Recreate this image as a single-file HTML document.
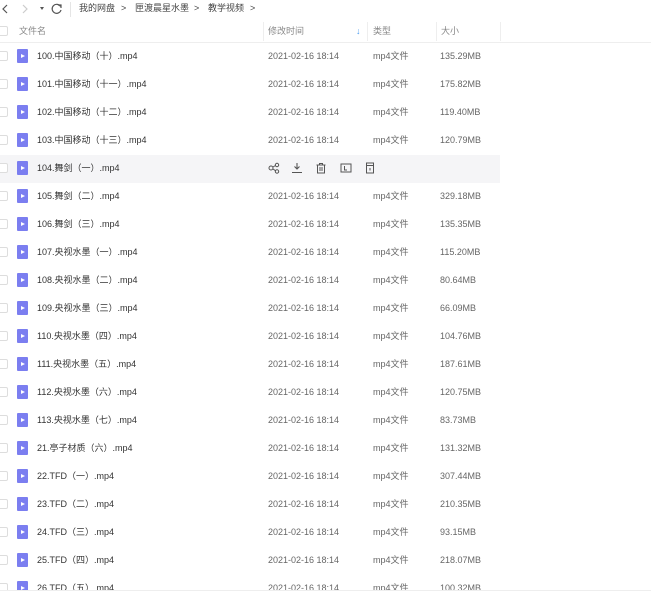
<!DOCTYPE html>
<html><head><meta charset="utf-8"><style>
*{margin:0;padding:0;box-sizing:border-box}
body{width:651px;height:598px;overflow:hidden;background:#fff;font-family:"Liberation Sans","Noto Sans CJK SC",sans-serif;color:#333;font-size:9px;line-height:12px;position:relative}
.abs{position:absolute;white-space:nowrap;line-height:12px}
.tb{position:absolute;left:0;top:0;width:651px;height:20px}
.hd{position:absolute;left:0;top:20px;width:651px;height:23px;border-bottom:1px solid #eee;color:#888}
.sep{position:absolute;top:22px;width:1px;height:19px;background:#eee}
.list{position:absolute;left:0;top:43px;width:651px;height:548px;overflow:hidden;border-bottom:1px solid #eee}
.row{position:absolute;left:0;width:651px;height:28px}
.cb{position:absolute;left:-2px;top:8px;width:10px;height:10px;border:1px solid #ddd;border-radius:2px;background:#fff}
.fi{position:absolute;left:17px;top:6px;width:11px;height:14px;background:#7b7ef0;border-radius:1px}
.fi:after{content:"";position:absolute;left:4px;top:5px;border-left:4px solid #fff;border-top:2.5px solid transparent;border-bottom:2.5px solid transparent}
.c{position:absolute;top:7px;white-space:nowrap;line-height:12px;height:12px}
.n{left:37px;color:#333}
.d{left:268px;color:#666}
.t{left:373px;color:#666}
.s{left:440px;color:#666}
.ic{position:absolute;top:7px}
</style></head><body>
<div class="tb">
<svg class="abs" style="left:0;top:3px" width="10" height="12"><path d="M7 2 L3 6 L7 10" stroke="#555" stroke-width="1.2" fill="none"/></svg>
<svg class="abs" style="left:20px;top:3px" width="10" height="12"><path d="M3 2 L7 6 L3 10" stroke="#ccc" stroke-width="1.2" fill="none"/></svg>
<div class="abs" style="left:40px;top:7px;border-top:3px solid #555;border-left:2.5px solid transparent;border-right:2.5px solid transparent"></div>
<svg class="abs" style="left:50px;top:2px" width="14" height="14"><path d="M10.5 4.5 A4.5 4.5 0 1 0 11 8" stroke="#555" stroke-width="1.2" fill="none"/><path d="M8 3 L11 3 L11 6" stroke="#555" stroke-width="1.2" fill="none"/></svg>
<div class="abs" style="left:70px;top:2px;width:1px;height:15px;background:#e5e5e5"></div>
<div class="abs" style="left:79px;top:2px;color:#444">我的网盘</div>
<div class="abs" style="left:121px;top:2px;color:#444">&gt;</div>
<div class="abs" style="left:135px;top:2px;color:#444">匣渡晨星水墨</div>
<div class="abs" style="left:194px;top:2px;color:#444">&gt;</div>
<div class="abs" style="left:208px;top:2px;color:#444">教学视频</div>
<div class="abs" style="left:250px;top:2px;color:#444">&gt;</div>
</div>
<div class="hd">
<div class="cb" style="top:6px"></div>
<div class="abs" style="left:19px;top:5px">文件名</div>
<div class="abs" style="left:268px;top:5px">修改时间</div>
<div class="abs" style="left:356px;top:5px;color:#4a9cf0;font-size:9px">↓</div>
<div class="abs" style="left:373px;top:5px">类型</div>
<div class="abs" style="left:441px;top:5px">大小</div>
</div>
<div class="sep" style="left:263px"></div><div class="sep" style="left:367px"></div><div class="sep" style="left:436px"></div><div class="sep" style="left:500px"></div>
<div class="list">
<div class="row" style="top:0"><div class="cb"></div><div class="fi"></div><div class="c n">100.中国移动（十）.mp4</div><div class="c d">2021-02-16 18:14</div><div class="c t">mp4文件</div><div class="c s">135.29MB</div></div>
<div class="row" style="top:28px"><div class="cb"></div><div class="fi"></div><div class="c n">101.中国移动（十一）.mp4</div><div class="c d">2021-02-16 18:14</div><div class="c t">mp4文件</div><div class="c s">175.82MB</div></div>
<div class="row" style="top:56px"><div class="cb"></div><div class="fi"></div><div class="c n">102.中国移动（十二）.mp4</div><div class="c d">2021-02-16 18:14</div><div class="c t">mp4文件</div><div class="c s">119.40MB</div></div>
<div class="row" style="top:84px"><div class="cb"></div><div class="fi"></div><div class="c n">103.中国移动（十三）.mp4</div><div class="c d">2021-02-16 18:14</div><div class="c t">mp4文件</div><div class="c s">120.79MB</div></div>
<div class="row" style="top:112px;width:500px;background:#f5f5f7"><div class="cb"></div><div class="fi"></div><div class="c n">104.舞剑（一）.mp4</div>
<svg class="ic" style="left:268px" width="12" height="12"><circle cx="3" cy="6" r="2" stroke="#555" fill="none"/><circle cx="9" cy="3" r="1.7" stroke="#555" fill="none"/><circle cx="9" cy="9.5" r="1.7" stroke="#555" fill="none"/><path d="M5 5 L7.5 3.5 M5 7 L7.5 8.7" stroke="#555"/></svg>
<svg class="ic" style="left:291px" width="12" height="12"><path d="M6 1 V7 M3.5 4.5 L6 7 L8.5 4.5 M1 10.5 H11" stroke="#555" stroke-width="1.1" fill="none"/></svg>
<svg class="ic" style="left:315px" width="12" height="12"><path d="M1.5 3 H10.5 M4.5 3 V1.5 H7.5 V3 M2.5 3 V11 H9.5 V3 M5 5 V9 M7 5 V9" stroke="#555" fill="none"/></svg>
<svg class="ic" style="left:340px" width="12" height="12"><rect x="1" y="2" width="10" height="8" stroke="#555" fill="none"/><path d="M4.5 4 V8 H7" stroke="#555" fill="none"/></svg>
<svg class="ic" style="left:364px" width="12" height="12"><rect x="2.5" y="1" width="7" height="10" stroke="#555" fill="none"/><path d="M2.5 3.5 H9.5 M6 6 V8.5" stroke="#555" fill="none"/></svg>
</div>
<div class="row" style="top:140px"><div class="cb"></div><div class="fi"></div><div class="c n">105.舞剑（二）.mp4</div><div class="c d">2021-02-16 18:14</div><div class="c t">mp4文件</div><div class="c s">329.18MB</div></div>
<div class="row" style="top:168px"><div class="cb"></div><div class="fi"></div><div class="c n">106.舞剑（三）.mp4</div><div class="c d">2021-02-16 18:14</div><div class="c t">mp4文件</div><div class="c s">135.35MB</div></div>
<div class="row" style="top:196px"><div class="cb"></div><div class="fi"></div><div class="c n">107.央视水墨（一）.mp4</div><div class="c d">2021-02-16 18:14</div><div class="c t">mp4文件</div><div class="c s">115.20MB</div></div>
<div class="row" style="top:224px"><div class="cb"></div><div class="fi"></div><div class="c n">108.央视水墨（二）.mp4</div><div class="c d">2021-02-16 18:14</div><div class="c t">mp4文件</div><div class="c s">80.64MB</div></div>
<div class="row" style="top:252px"><div class="cb"></div><div class="fi"></div><div class="c n">109.央视水墨（三）.mp4</div><div class="c d">2021-02-16 18:14</div><div class="c t">mp4文件</div><div class="c s">66.09MB</div></div>
<div class="row" style="top:280px"><div class="cb"></div><div class="fi"></div><div class="c n">110.央视水墨（四）.mp4</div><div class="c d">2021-02-16 18:14</div><div class="c t">mp4文件</div><div class="c s">104.76MB</div></div>
<div class="row" style="top:308px"><div class="cb"></div><div class="fi"></div><div class="c n">111.央视水墨（五）.mp4</div><div class="c d">2021-02-16 18:14</div><div class="c t">mp4文件</div><div class="c s">187.61MB</div></div>
<div class="row" style="top:336px"><div class="cb"></div><div class="fi"></div><div class="c n">112.央视水墨（六）.mp4</div><div class="c d">2021-02-16 18:14</div><div class="c t">mp4文件</div><div class="c s">120.75MB</div></div>
<div class="row" style="top:364px"><div class="cb"></div><div class="fi"></div><div class="c n">113.央视水墨（七）.mp4</div><div class="c d">2021-02-16 18:14</div><div class="c t">mp4文件</div><div class="c s">83.73MB</div></div>
<div class="row" style="top:392px"><div class="cb"></div><div class="fi"></div><div class="c n">21.亭子材质（六）.mp4</div><div class="c d">2021-02-16 18:14</div><div class="c t">mp4文件</div><div class="c s">131.32MB</div></div>
<div class="row" style="top:420px"><div class="cb"></div><div class="fi"></div><div class="c n">22.TFD（一）.mp4</div><div class="c d">2021-02-16 18:14</div><div class="c t">mp4文件</div><div class="c s">307.44MB</div></div>
<div class="row" style="top:448px"><div class="cb"></div><div class="fi"></div><div class="c n">23.TFD（二）.mp4</div><div class="c d">2021-02-16 18:14</div><div class="c t">mp4文件</div><div class="c s">210.35MB</div></div>
<div class="row" style="top:476px"><div class="cb"></div><div class="fi"></div><div class="c n">24.TFD（三）.mp4</div><div class="c d">2021-02-16 18:14</div><div class="c t">mp4文件</div><div class="c s">93.15MB</div></div>
<div class="row" style="top:504px"><div class="cb"></div><div class="fi"></div><div class="c n">25.TFD（四）.mp4</div><div class="c d">2021-02-16 18:14</div><div class="c t">mp4文件</div><div class="c s">218.07MB</div></div>
<div class="row" style="top:532px"><div class="cb"></div><div class="fi"></div><div class="c n">26.TFD（五）.mp4</div><div class="c d">2021-02-16 18:14</div><div class="c t">mp4文件</div><div class="c s">100.32MB</div></div>
</div>
</body></html>
